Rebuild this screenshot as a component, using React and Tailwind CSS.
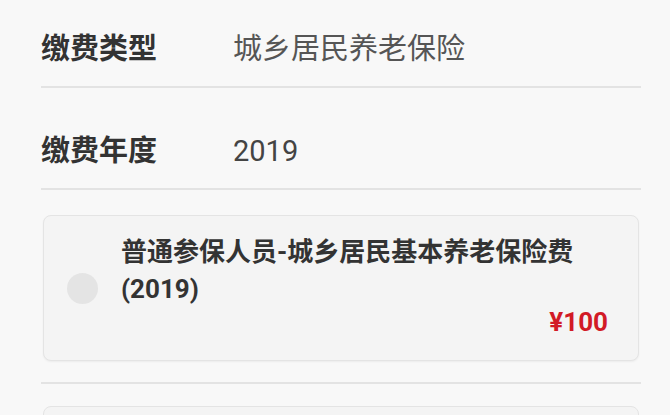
export default function App() {
  const font = { fontFamily: 'Roboto, "Noto Sans CJK SC", sans-serif' };
  return (
    <div className="w-[670px] h-[415px] overflow-hidden bg-[#f8f8f8]" style={font}>
      <div className="pl-[41px] pr-[29px]">
        <div className="h-[88px] pt-[12px] flex items-center border-b-2 border-[#e3e3e3]">
          <div className="w-[192px] text-[29px] leading-[40px] font-bold text-[#333]">缴费类型</div>
          <div className="text-[29px] leading-[40px] text-[#555]">城乡居民养老保险</div>
        </div>
        <div className="h-[102px] pt-[26px] flex items-center border-b-2 border-[#e3e3e3]">
          <div className="w-[192px] text-[29px] leading-[40px] font-bold text-[#333]">缴费年度</div>
          <div className="text-[29px] leading-[40px] text-[#444]">2019</div>
        </div>
        <div className="mt-[25px] mx-[2px] h-[146px] rounded-[8px] border border-[#e4e4e4] bg-[#f4f4f4] flex items-start pt-[18px] pl-[23px] pr-[30px] shadow-[0_1px_2px_rgba(0,0,0,0.05)]">
          <div className="self-center -mt-[18px] w-[31px] h-[31px] rounded-full bg-[#e4e4e4] shrink-0"></div>
          <div className="ml-[23px] flex-1 flex flex-col">
            <div className="text-[26px] leading-[37px] font-bold text-[#333]">
              普通参保人员-城乡居民基本养老保险费
              <br />
              (2019)
            </div>
            <div className="text-right text-[26px] leading-[28px] font-bold text-[#d21a26]">¥100</div>
          </div>
        </div>
        <div className="mt-[21px] border-b-2 border-[#e3e3e3]"></div>
        <div className="mt-[22px] mx-[2px] h-[145px] rounded-[8px] border border-[#e4e4e4] bg-[#f4f4f4]"></div>
      </div>
    </div>
  );
}
